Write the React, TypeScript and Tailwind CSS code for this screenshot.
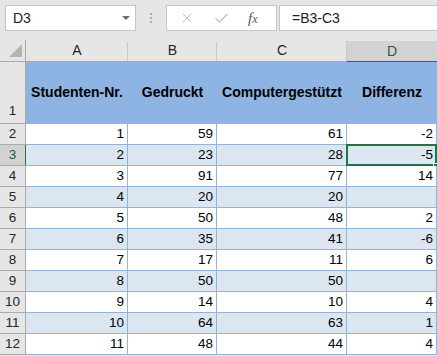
import { Check, X } from "lucide-react";

const rows = [
  [1, 59, 61, -2],
  [2, 23, 28, -5],
  [3, 91, 77, 14],
  [4, 20, 20, null],
  [5, 50, 48, 2],
  [6, 35, 41, -6],
  [7, 17, 11, 6],
  [8, 50, 50, null],
  [9, 14, 10, 4],
  [10, 64, 63, 1],
  [11, 48, 44, 4],
];

const font = { fontFamily: '"Liberation Sans", Arial, sans-serif' };

export default function App() {
  return (
    <div className="w-[437px] h-[356px] overflow-hidden bg-[#e6e6e6] text-[13.5px] text-black" style={font}>
      {/* Formula bar */}
      <div className="h-[40px] flex items-start pt-[5px] pl-[5px]">
        <div className="w-[131px] h-[26px] bg-white border border-[#c6c6c6] flex items-center justify-between pl-[7px] pr-[5px]">
          <span className="text-[14px] text-[#222]">D3</span>
          <span className="w-0 h-0 border-l-[4px] border-r-[4px] border-t-[4px] border-l-transparent border-r-transparent border-t-[#6e6e6e]" />
        </div>
        <div className="w-[30px] h-[26px] flex flex-col items-center justify-center gap-[2px]">
          <span className="w-[2px] h-[2px] bg-[#b0b0b0]" />
          <span className="w-[2px] h-[2px] bg-[#b0b0b0]" />
          <span className="w-[2px] h-[2px] bg-[#b0b0b0]" />
        </div>
        <div className="w-[111px] h-[26px] bg-white border border-[#c6c6c6] flex items-center pl-[12px]">
          <X size={16} strokeWidth={1.5} className="text-[#c0c0c0]" />
          <Check size={17} strokeWidth={1.8} className="text-[#c0c0c0] ml-[18px]" />
          <span className="ml-[18px] text-[15px] text-[#555] italic" style={{ fontFamily: '"Liberation Serif", serif' }}>
            f<span className="text-[12px]">x</span>
          </span>
        </div>
        <div className="ml-[2px] flex-1 h-[26px] bg-white border border-[#c6c6c6] border-r-0 flex items-center pl-[12px]">
          <span className="text-[14px] text-[#222]">=B3-C3</span>
        </div>
      </div>

      {/* Grid */}
      <div className="grid grid-cols-[26px_102px_89px_130px_90px]">
        {/* Column headers */}
        <div className="h-[22px] border-r border-b border-[#ababab] relative">
          <svg className="absolute right-[3px] bottom-[4px]" width="13" height="13" viewBox="0 0 13 13">
            <polygon points="13,0 13,13 0,13" fill="#b4b4b4" />
          </svg>
        </div>
        {["A", "B", "C"].map((c) => (
          <div key={c} className="h-[22px] border-b border-[#ababab] relative flex items-center justify-center text-[14px] text-[#262626]">
            <span className="absolute right-0 top-[2px] bottom-0 w-px bg-[#c8c8c8]" />
            {c}
          </div>
        ))}
        <div className="h-[22px] mt-[1px] -mb-[1px] border-l border-[#c8c8c8] bg-[#d2d2d2] border-b-2 border-b-[#217346] flex items-center justify-center text-[14px] text-[#1e5e3c] -ml-px">
          D
        </div>

        {/* Row 1 header */}
        <div className="h-[62px] border-r border-b border-[#ababab] flex items-end justify-center pb-[2px] text-[#262626]">1</div>
        {["Studenten-Nr.", "Gedruckt", "Computergestützt", "Differenz"].map((h) => (
          <div key={h} className="h-[62px] bg-[#8db4e2] border-b border-[#95b3d7] flex items-center justify-center font-bold text-[14px]">
            {h}
          </div>
        ))}

        {rows.map((r, i) => {
          const n = i + 2;
          const sel = n === 3;
          const bg = i % 2 === 0 ? "bg-white" : "bg-[#dce6f1]";
          return [
            <div
              key={`h${n}`}
              className={
                sel
                  ? "h-[21px] bg-[#d2d2d2] border-r-2 border-r-[#217346] border-b border-b-[#ababab] -mr-px flex items-center justify-center text-[#1e5e3c]"
                  : "h-[21px] border-r border-b border-[#ababab] flex items-center justify-center text-[#262626]"
              }
            >
              {n}
            </div>,
            ...r.map((v, j) => (
              <div
                key={`c${n}-${j}`}
                className={`h-[21px] ${bg} border-r border-b border-[#95b3d7] flex items-center justify-end pr-[3px] relative`}
              >
                {v ?? ""}
                {sel && j === 3 && (
                  <>
                    <span className="absolute -left-[1px] -top-[1px] right-[-1px] bottom-[-1px] border-2 border-[#217346]" />
                    <span className="absolute -right-[2px] -bottom-[3px] w-[5px] h-[5px] bg-[#217346] border border-white" />
                  </>
                )}
              </div>
            )),
          ];
        })}
      </div>
    </div>
  );
}
